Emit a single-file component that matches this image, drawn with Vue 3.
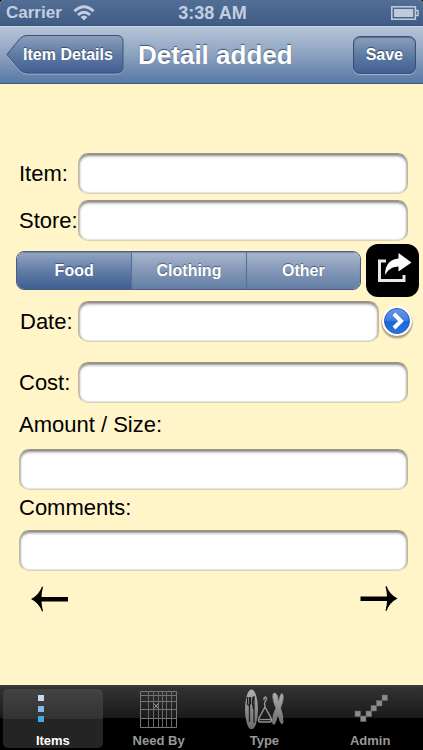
<script setup>
import { ref } from 'vue'

const item = ref('')
const store = ref('')
const date = ref('')
const cost = ref('')
const amount = ref('')
const comments = ref('')
const categories = ['Food', 'Clothing', 'Other']
const category = ref('Food')
const tabs = ['Items', 'Need By', 'Type', 'Admin']
const tab = ref('Items')
</script>

<template>
  <div class="screen">
    <div class="status">
      <div class="carrier">
        <span>Carrier</span>
        <svg width="22" height="16" viewBox="0 0 22 16" aria-hidden="true">
          <g fill="none" stroke="#c3cfe0" stroke-width="3">
            <path d="M1.500 6.200Q11-2.600 20.500 6.200" />
            <path d="M5 10Q11 4.400 17 10" />
          </g>
          <path d="M7.500 12Q11 9 14.500 12L11 15.500z" fill="#c3cfe0" />
        </svg>
      </div>
      <span class="time">3:38 AM</span>
      <svg class="battery" width="28" height="14" viewBox="0 0 28 14" aria-hidden="true">
        <rect x="0.8" y="0.8" width="23.6" height="12.4" fill="none" stroke="#c3cfe0" stroke-width="1.5" />
        <rect x="3" y="3" width="19.2" height="8" fill="#bfcbdc" />
        <path d="M24.5 4.5h2.5v5h-2.5" fill="none" stroke="#c3cfe0" stroke-width="1.4" />
      </svg>
    </div>

    <header class="nav">
      <button class="back" type="button">
        <svg width="118" height="40" viewBox="0 0 118 40" aria-hidden="true">
          <defs>
            <linearGradient id="backFill" x1="0" y1="0" x2="0" y2="1">
              <stop offset="0" stop-color="#8c9fbd" />
              <stop offset="0.5" stop-color="#607ba5" />
              <stop offset="1" stop-color="#405f93" />
            </linearGradient>
          </defs>
          <path d="M1 20.500L14 4.500Q17 1.500 21 1.500H111Q117 1.500 117 7.500V33Q117 39 111 39H21Q17 39 14 36z" fill="none" stroke="#a4b4ce" />
          <path d="M1 19.500L14 3.500Q17 .5 21 .5H111Q117 .5 117 6.500V32Q117 38 111 38H21Q17 38 14 35z" fill="url(#backFill)" stroke="#3b4f71" />
        </svg>
        <span>Item Details</span>
      </button>
      <h1>Detail added</h1>
      <button class="save" type="button">Save</button>
    </header>

    <main class="form">
      <div class="row">
        <label for="item">Item:</label>
        <input id="item" v-model="item" type="text" />
      </div>
      <div class="row">
        <label for="store">Store:</label>
        <input id="store" v-model="store" type="text" />
      </div>
      <div class="choices">
        <div class="segments" role="group" aria-label="Type">
          <button
            v-for="c in categories"
            :key="c"
            type="button"
            :class="{ chosen: c === category }"
            :aria-pressed="c === category"
            @click="category = c"
          >{{ c }}</button>
        </div>
        <button class="share" type="button" aria-label="Share">
          <svg width="53" height="53" viewBox="0 0 53 53" aria-hidden="true">
            <path d="M20 17H13.500V36.500H38V31" fill="none" stroke="#e8e8e8" stroke-width="3" />
            <path d="M19 31C19 20 25 15 32.500 14.500V9L45.500 18.500L32.500 27.500V22.500C26 22.500 22 26 19 31z" fill="#fff" />
          </svg>
        </button>
      </div>
      <div class="row date">
        <label for="date">Date:</label>
        <input id="date" v-model="date" type="text" />
        <button class="disclose" type="button" aria-label="Choose date">
          <svg width="36" height="38" viewBox="0 0 36 38" aria-hidden="true">
            <defs>
              <linearGradient id="discFill" x1="0" y1="0" x2="0" y2="1">
                <stop offset="0" stop-color="#6b9be4" />
                <stop offset="0.5" stop-color="#3c7bdc" />
                <stop offset="0.51" stop-color="#1d66d6" />
                <stop offset="1" stop-color="#2a72e0" />
              </linearGradient>
            </defs>
            <circle cx="18" cy="20.500" r="16" fill="#000" opacity="0.1" />
            <circle cx="18" cy="19.500" r="15.500" fill="#000" opacity="0.25" />
            <circle cx="18" cy="18" r="15" fill="#fff" />
            <circle cx="18" cy="18" r="12.500" fill="url(#discFill)" stroke="#2460ba" />
            <path d="M15 11L22 18L15 25" fill="none" stroke="#fff" stroke-width="4" />
          </svg>
        </button>
      </div>
      <div class="row cost">
        <label for="cost">Cost:</label>
        <input id="cost" v-model="cost" type="text" />
      </div>
      <div class="stack">
        <label for="amount">Amount / Size:</label>
        <input id="amount" v-model="amount" type="text" />
      </div>
      <div class="stack comments">
        <label for="comments">Comments:</label>
        <input id="comments" v-model="comments" type="text" />
      </div>
      <div class="pager">
        <button type="button" aria-label="Previous">
          <svg width="38" height="26" viewBox="0 0 38 26" aria-hidden="true">
            <path d="M0 13Q8 9 11 .5L12 1Q10.500 7 10.500 11H37V15.500H10.500Q10.500 19 12 25L11 25.500Q8 17 0 13z" />
          </svg>
        </button>
        <button type="button" aria-label="Next">
          <svg width="38" height="26" viewBox="0 0 38 26" aria-hidden="true">
            <path d="M37.500 12.500Q29.500 8.500 26.500 0L25.500 .5Q27 6.500 27 10.500H.5V15H27Q27 18.500 25.500 24.500L26.500 25Q29.500 16.500 37.500 12.500z" />
          </svg>
        </button>
      </div>
    </main>

    <nav class="tabs" aria-label="Sections">
      <button
        v-for="t in tabs"
        :key="t"
        type="button"
        :class="{ active: t === tab }"
        @click="tab = t"
      >
        <svg v-if="t === 'Items'" width="40" height="40" viewBox="0 0 40 40" aria-hidden="true">
          <rect x="5" y="6" width="6" height="6" fill="#c6d9f2" />
          <rect x="5" y="17" width="6" height="6" fill="#86b9ea" />
          <rect x="5" y="27" width="6" height="6" fill="#3ba9ec" />
        </svg>
        <svg v-else-if="t === 'Need By'" width="40" height="40" viewBox="0 0 40 40" aria-hidden="true">
          <g fill="none" stroke="#777">
            <path d="M1.500 2.500H37.500V38.500H1.500zM1.500 6.500H37.500M1.500 12.500H37.500M1.500 20.500H37.500M1.500 29.500H37.500" />
            <path d="M9.500 2.500V38.500M14.500 2.500V38.500M19.500 2.500V38.500M23.500 2.500V38.500M27.500 2.500V38.500M32.500 2.500V38.500" stroke="#696969" />
            <path d="M15 14.500L19.500 19.500M19.500 14.500L15 19.500" stroke="#aaa" />
          </g>
        </svg>
        <svg v-else-if="t === 'Type'" width="40" height="40" viewBox="0 0 40 40" aria-hidden="true">
          <defs>
            <linearGradient id="iconGray" x1="0" y1="0" x2="0" y2="1">
              <stop offset="0" stop-color="#b0b0b0" />
              <stop offset="1" stop-color="#696969" />
            </linearGradient>
          </defs>
          <ellipse cx="7.500" cy="20.500" rx="6.500" ry="20" fill="url(#iconGray)" />
          <path d="M5.500 8V18M3.500 8V15Q5.500 19 6.500 14V8M5.500 18V33M10 7V34M9 8Q7.500 14 9.500 20" fill="none" stroke="#202020" stroke-width="1.300" />
          <path d="M20 11Q20 8 21.500 8Q23.500 9 21.500 12Q20 13 21 18L14.500 30Q14 33 16.500 33H25.500Q28 33 27.500 30L21 18M15.500 30.500H27" fill="none" stroke="#929292" stroke-width="1.500" />
          <path d="M29 5Q31 2 33.500 7L34.500 13L36.500 6Q38 3 39 6Q40 10 36.500 19Q39 26 39 33Q38 37 36 32L34 25L31.500 33Q29.500 38 28.500 33Q28.500 26 32 19Q28 10 29 5z" fill="url(#iconGray)" stroke="#8b8b8b" stroke-width="0.8" />
        </svg>
        <svg v-else width="40" height="40" viewBox="0 0 40 40" aria-hidden="true">
          <g fill="#8b8b8b" stroke="#666" stroke-width="0.5">
            <rect x="5" y="22" width="5.500" height="5.500" />
            <rect x="10.500" y="27" width="5.500" height="5.500" />
            <rect x="16" y="22" width="5.500" height="5.500" />
            <rect x="21" y="16.500" width="5.500" height="5.500" />
            <rect x="26.500" y="11.500" width="5.500" height="5.500" />
            <rect x="32" y="6" width="5.500" height="5.500" />
          </g>
        </svg>
        <span>{{ t }}</span>
      </button>
    </nav>
  </div>
</template>

<style>
body {
  margin: 0;
  background: #000;
}
</style>

<style scoped>
.screen {
  display: flex;
  flex-direction: column;
  min-height: 100vh;
  background: #fff5c9;
  border-radius: 4px 4px 0 0;
  overflow: hidden;
  font-family: "Liberation Sans", Arial, sans-serif;
}
button {
  margin: 0;
  padding: 0;
  border: 0;
  background: none;
  font: inherit;
  cursor: pointer;
}
svg {
  display: block;
}
.status {
  display: grid;
  grid-template-columns: 1fr auto 1fr;
  align-items: center;
  height: 26px;
  padding: 1px 4px 0 6px;
  box-sizing: border-box;
  background: linear-gradient(#536f95, #3f5c86);
  border-bottom: 1px solid #35507a;
  color: #c3cfe0;
  font-size: 17px;
  font-weight: bold;
}
.carrier {
  display: flex;
  align-items: center;
  gap: 11px;
}
.time {
  font-size: 18px;
}
.battery {
  justify-self: end;
}
.nav {
  display: flex;
  align-items: center;
  justify-content: space-between;
  height: 58px;
  padding: 0 7px 0 6px;
  box-sizing: border-box;
  background: linear-gradient(#b6c5d9, #8ca2c0 50%, #5878a5);
  border-top: 1px solid #cfdae8;
  border-bottom: 1px solid #43597c;
  color: #fff;
  text-shadow: 0 -1px 1px rgba(30, 45, 75, 0.7);
}
.nav h1 {
  flex: 1;
  margin: 0;
  padding-right: 60px;
  text-align: right;
  font-size: 26px;
  line-height: 32px;
  white-space: nowrap;
}
.back {
  display: grid;
  align-items: center;
  color: #fff;
  font-size: 16px;
  font-weight: bold;
  text-shadow: inherit;
}
.back svg,
.back span {
  grid-area: 1 / 1;
}
.back span {
  padding-left: 6px;
}
.save {
  height: 38px;
  padding: 0 12px;
  background: linear-gradient(#8c9fbd, #607ba5 50%, #405f93);
  border: 1px solid #3b4f71;
  border-radius: 7px;
  box-shadow: 0 1px 0 #a4b4ce, inset 0 1px 1px rgba(50, 65, 95, 0.5);
  color: #fff;
  font-size: 16px;
  font-weight: bold;
  text-shadow: inherit;
}
.form {
  flex: 1;
  display: flex;
  flex-direction: column;
  gap: 6px;
  padding: 69px 15px 0 19px;
  color: #000;
  font-size: 22px;
}
.row {
  display: grid;
  grid-template-columns: 59px 1fr;
  align-items: center;
  white-space: nowrap;
}
input {
  width: 100%;
  height: 41px;
  min-width: 0;
  box-sizing: border-box;
  padding: 0 10px;
  border: 1px solid;
  border-color: #9c967e #bfb89b #dcd3b0;
  border-radius: 10px;
  outline: none;
  background: #fff;
  box-shadow: inset 0 2px 3px rgba(0, 0, 0, 0.45), inset 0 0 2px rgba(0, 0, 0, 0.3);
  font: inherit;
}
.choices {
  display: flex;
  align-items: center;
  gap: 5px;
  margin: -3px -11px 0 -3px;
}
.segments {
  flex: 1;
  display: grid;
  grid-template-columns: repeat(3, 1fr);
  height: 39px;
  box-sizing: border-box;
  border: 1px solid #4a5e80;
  border-radius: 8px;
  overflow: hidden;
}
.segments button {
  background: linear-gradient(#aab8cf, #8498b7 50%, #627ea5);
  color: #fff;
  font-size: 16px;
  font-weight: bold;
  text-shadow: 0 -1px 1px rgba(30, 45, 75, 0.6);
  box-shadow: inset 0 1px 1px rgba(60, 75, 105, 0.4);
}
.segments button + button {
  border-left: 1px solid #5a7197;
}
.segments .chosen {
  background: linear-gradient(#94a6c2, #627da7 50%, #3e5e91);
}
.share {
  background: #000;
  border-radius: 12px;
}
.date {
  grid-template-columns: 59px 1fr 36px;
  margin: -2px -7px 0 0;
}
.date label {
  padding-left: 1px;
}
.disclose {
  height: 38px;
}
.cost {
  margin-top: 14px;
}
.stack {
  display: flex;
  flex-direction: column;
  gap: 12px;
  padding-top: 4px;
}
.stack label {
  line-height: 24px;
}
.comments {
  gap: 10px;
  padding-top: 0;
}
.pager {
  display: flex;
  justify-content: space-between;
  padding: 9px 10px 0 12px;
}
.tabs {
  display: grid;
  grid-template-columns: repeat(4, 1fr);
  height: 65px;
  box-sizing: border-box;
  padding-top: 2px;
  border-top: 2px solid #3c3a32;
  background: linear-gradient(#333, #191919 50%, #000 50%);
}
.tabs button {
  display: flex;
  flex-direction: column;
  align-items: center;
  gap: 4px;
  margin: 0 3px 3px;
  border-radius: 5px;
  color: #999;
  font-size: 13px;
  font-weight: bold;
  line-height: 15px;
}
.tabs .active {
  background: linear-gradient(#434343, #323232 50%, #242424 50%);
  color: #fff;
}
</style>
